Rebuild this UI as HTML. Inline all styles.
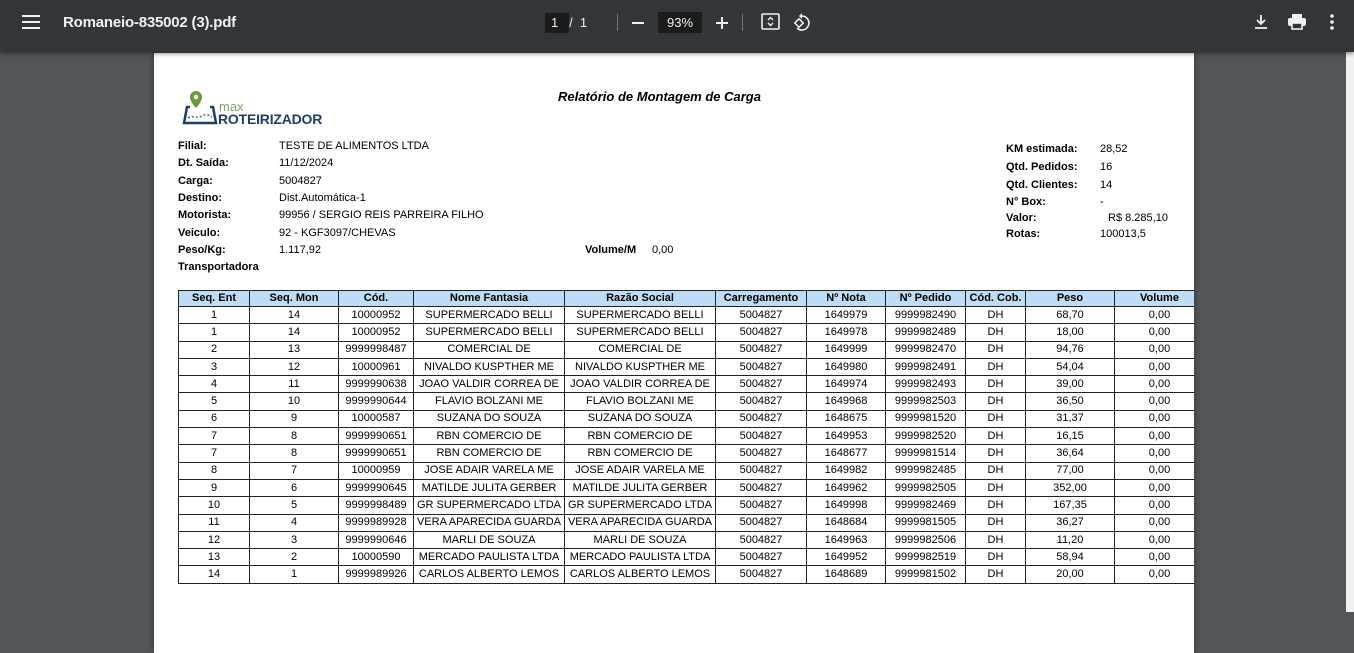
<!DOCTYPE html>
<html><head><meta charset="utf-8"><style>
*{margin:0;padding:0;box-sizing:border-box}
body{width:1354px;height:612px;overflow:hidden;background:#525659;font-family:"Liberation Sans",Arial,sans-serif;position:relative}
.bar{position:absolute;left:0;top:0;width:1354px;height:52px;background:#323639;box-shadow:0 2px 4px rgba(0,0,0,.4);z-index:5;color:#f1f1f1}
.page{position:absolute;left:154px;top:53px;width:1040px;height:600px;background:#fff;overflow:hidden;box-shadow:0 0 6px rgba(0,0,0,.4)}
.t{position:absolute;font-size:11px;color:#000;white-space:nowrap}
.b{font-weight:bold}
table{position:absolute;left:24px;top:237px;width:1026px;border-collapse:collapse;table-layout:fixed;font-size:11px}
td,th{border:1px solid #222;height:17.3px;text-align:center;white-space:nowrap;overflow:hidden;padding:0;line-height:15px}
th{background:#bfdcf7;height:15px;font-weight:bold}
.sb{position:absolute;right:0;top:52px;width:8px;height:560px;background:#f1f1f1}
</style></head><body>
<div class="bar">
<svg style="position:absolute;left:22px;top:14px" width="18" height="16"><rect y="1" width="18" height="2" fill="#f1f1f1"/><rect y="7" width="18" height="2" fill="#f1f1f1"/><rect y="13" width="18" height="2" fill="#f1f1f1"/></svg>
<div style="position:absolute;left:63px;top:14px;font-size:15px;font-weight:bold;letter-spacing:-.2px">Romaneio-835002 (3).pdf</div>
<div style="position:absolute;left:545px;top:13px;width:24px;height:20px;background:#191b1c"></div>
<div style="position:absolute;left:551px;top:15px;font-size:13px">1&nbsp;&nbsp;&nbsp;/&nbsp;&nbsp;1</div>
<div style="position:absolute;left:617px;top:14px;width:1px;height:17px;background:#777"></div>
<div style="position:absolute;left:632px;top:22px;width:12px;height:2px;background:#f1f1f1"></div>
<div style="position:absolute;left:658px;top:12px;width:44px;height:21px;background:#191b1c;font-size:13px;text-align:center;line-height:21px">93%</div>
<div style="position:absolute;left:716px;top:22px;width:12px;height:2px;background:#f1f1f1"></div>
<div style="position:absolute;left:721px;top:17px;width:2px;height:12px;background:#f1f1f1"></div>
<div style="position:absolute;left:742px;top:14px;width:1px;height:17px;background:#777"></div>
<svg style="position:absolute;left:761px;top:13px" width="20" height="18"><rect x="1" y="1" width="17" height="15" rx="1" fill="none" stroke="#f1f1f1" stroke-width="1.6"/><path d="M7 7l2.5-2.5L12 7M7 10l2.5 2.5L12 10" fill="none" stroke="#f1f1f1" stroke-width="1.4"/></svg>
<svg style="position:absolute;left:793px;top:12px" width="20" height="20"><path d="M9 4a7 7 0 1 1-5 12" fill="none" stroke="#f1f1f1" stroke-width="1.6"/><path d="M9 1v6l-3-3z" fill="#f1f1f1"/><rect x="3" y="8" width="6" height="6" transform="rotate(45 6 11)" fill="none" stroke="#f1f1f1" stroke-width="1.5"/></svg>
<svg style="position:absolute;left:1253px;top:14px" width="16" height="16"><path d="M8 1v9M4 6l4 4 4-4M2 14h12" fill="none" stroke="#f1f1f1" stroke-width="1.8"/></svg>
<svg style="position:absolute;left:1288px;top:13px" width="18" height="17"><rect x="4" y="1" width="10" height="4" fill="#f1f1f1"/><rect x="0" y="5" width="18" height="8" rx="2" fill="#f1f1f1"/><rect x="4" y="10" width="10" height="6" fill="#323639" stroke="#f1f1f1" stroke-width="1.6"/></svg>
<svg style="position:absolute;left:1330px;top:14px" width="4" height="16"><circle cx="2" cy="2" r="1.8" fill="#f1f1f1"/><circle cx="2" cy="8" r="1.8" fill="#f1f1f1"/><circle cx="2" cy="14" r="1.8" fill="#f1f1f1"/></svg>
</div>
<div class="sb"></div>
<div class="page">
<svg style="position:absolute;left:28px;top:36px" width="36" height="40"><path d="M14 2a6 6 0 0 1 6 6c0 5-6 11-6 11s-6-6-6-11a6 6 0 0 1 6-6z" fill="#6b9a3c"/><circle cx="14" cy="8" r="2.3" fill="#fff"/><path d="M8 18H5L2 34h32l-3-16h-3" fill="none" stroke="#1e3f66" stroke-width="2.5"/><path d="M6 29c5-3 9 1 14-2s8 0 10 1" fill="none" stroke="#1e3f66" stroke-width="1.2" stroke-dasharray="2 2"/></svg>
<div style="position:absolute;left:65px;top:46px;font-size:13px;color:#7ea35a">max</div>
<div style="position:absolute;left:64px;top:58px;font-size:14px;font-weight:bold;color:#1e3f66;letter-spacing:-.2px">ROTEIRIZADOR</div>
<div class="t b" style="left:404px;top:36px;font-size:13px;font-style:italic">Relatório de Montagem de Carga</div>
<div class="t b" style="left:24px;top:87px">Filial:</div><div class="t" style="left:125px;top:87px">TESTE DE ALIMENTOS LTDA</div>
<div class="t b" style="left:24px;top:104px">Dt. Saída:</div><div class="t" style="left:125px;top:104px">11/12/2024</div>
<div class="t b" style="left:24px;top:122px">Carga:</div><div class="t" style="left:125px;top:122px">5004827</div>
<div class="t b" style="left:24px;top:139px">Destino:</div><div class="t" style="left:125px;top:139px">Dist.Automática-1</div>
<div class="t b" style="left:24px;top:156px">Motorista:</div><div class="t" style="left:125px;top:156px">99956 / SERGIO REIS PARREIRA FILHO</div>
<div class="t b" style="left:24px;top:174px">Veiculo:</div><div class="t" style="left:125px;top:174px">92 - KGF3097/CHEVAS</div>
<div class="t b" style="left:24px;top:191px">Peso/Kg:</div><div class="t" style="left:125px;top:191px">1.117,92</div>
<div class="t b" style="left:431px;top:191px">Volume/M</div><div class="t" style="left:498px;top:191px">0,00</div>
<div class="t b" style="left:24px;top:208px">Transportadora</div>
<div class="t b" style="left:852px;top:90px">KM estimada:</div><div class="t" style="left:946px;top:90px">28,52</div>
<div class="t b" style="left:852px;top:108px">Qtd. Pedidos:</div><div class="t" style="left:946px;top:108px">16</div>
<div class="t b" style="left:852px;top:126px">Qtd. Clientes:</div><div class="t" style="left:946px;top:126px">14</div>
<div class="t b" style="left:852px;top:143px">N° Box:</div><div class="t" style="left:946px;top:143px">-</div>
<div class="t b" style="left:852px;top:159px">Valor:</div><div class="t" style="left:954px;top:159px">R$ 8.285,10</div>
<div class="t b" style="left:852px;top:175px">Rotas:</div><div class="t" style="left:946px;top:175px">100013,5</div>
<table>
<colgroup><col style="width:71px"><col style="width:89px"><col style="width:75px"><col style="width:151px"><col style="width:151px"><col style="width:91px"><col style="width:79px"><col style="width:80px"><col style="width:60px"><col style="width:89px"><col style="width:90px"></colgroup>
<tr><th>Seq. Ent</th><th>Seq. Mon</th><th>Cód.</th><th>Nome Fantasia</th><th>Razão Social</th><th>Carregamento</th><th>Nº Nota</th><th>Nº Pedido</th><th>Cód. Cob.</th><th>Peso</th><th>Volume</th></tr>
<tr><td>1</td><td>14</td><td>10000952</td><td>SUPERMERCADO BELLI</td><td>SUPERMERCADO BELLI</td><td>5004827</td><td>1649979</td><td>9999982490</td><td>DH</td><td>68,70</td><td>0,00</td></tr>
<tr><td>1</td><td>14</td><td>10000952</td><td>SUPERMERCADO BELLI</td><td>SUPERMERCADO BELLI</td><td>5004827</td><td>1649978</td><td>9999982489</td><td>DH</td><td>18,00</td><td>0,00</td></tr>
<tr><td>2</td><td>13</td><td>9999998487</td><td>COMERCIAL DE</td><td>COMERCIAL DE</td><td>5004827</td><td>1649999</td><td>9999982470</td><td>DH</td><td>94,76</td><td>0,00</td></tr>
<tr><td>3</td><td>12</td><td>10000961</td><td>NIVALDO KUSPTHER ME</td><td>NIVALDO KUSPTHER ME</td><td>5004827</td><td>1649980</td><td>9999982491</td><td>DH</td><td>54,04</td><td>0,00</td></tr>
<tr><td>4</td><td>11</td><td>9999990638</td><td>JOAO VALDIR CORREA DE</td><td>JOAO VALDIR CORREA DE</td><td>5004827</td><td>1649974</td><td>9999982493</td><td>DH</td><td>39,00</td><td>0,00</td></tr>
<tr><td>5</td><td>10</td><td>9999990644</td><td>FLAVIO BOLZANI ME</td><td>FLAVIO BOLZANI ME</td><td>5004827</td><td>1649968</td><td>9999982503</td><td>DH</td><td>36,50</td><td>0,00</td></tr>
<tr><td>6</td><td>9</td><td>10000587</td><td>SUZANA DO SOUZA</td><td>SUZANA DO SOUZA</td><td>5004827</td><td>1648675</td><td>9999981520</td><td>DH</td><td>31,37</td><td>0,00</td></tr>
<tr><td>7</td><td>8</td><td>9999990651</td><td>RBN COMERCIO DE</td><td>RBN COMERCIO DE</td><td>5004827</td><td>1649953</td><td>9999982520</td><td>DH</td><td>16,15</td><td>0,00</td></tr>
<tr><td>7</td><td>8</td><td>9999990651</td><td>RBN COMERCIO DE</td><td>RBN COMERCIO DE</td><td>5004827</td><td>1648677</td><td>9999981514</td><td>DH</td><td>36,64</td><td>0,00</td></tr>
<tr><td>8</td><td>7</td><td>10000959</td><td>JOSE ADAIR VARELA ME</td><td>JOSE ADAIR VARELA ME</td><td>5004827</td><td>1649982</td><td>9999982485</td><td>DH</td><td>77,00</td><td>0,00</td></tr>
<tr><td>9</td><td>6</td><td>9999990645</td><td>MATILDE JULITA GERBER</td><td>MATILDE JULITA GERBER</td><td>5004827</td><td>1649962</td><td>9999982505</td><td>DH</td><td>352,00</td><td>0,00</td></tr>
<tr><td>10</td><td>5</td><td>9999998489</td><td>GR SUPERMERCADO LTDA</td><td>GR SUPERMERCADO LTDA</td><td>5004827</td><td>1649998</td><td>9999982469</td><td>DH</td><td>167,35</td><td>0,00</td></tr>
<tr><td>11</td><td>4</td><td>9999989928</td><td>VERA APARECIDA GUARDA</td><td>VERA APARECIDA GUARDA</td><td>5004827</td><td>1648684</td><td>9999981505</td><td>DH</td><td>36,27</td><td>0,00</td></tr>
<tr><td>12</td><td>3</td><td>9999990646</td><td>MARLI DE SOUZA</td><td>MARLI DE SOUZA</td><td>5004827</td><td>1649963</td><td>9999982506</td><td>DH</td><td>11,20</td><td>0,00</td></tr>
<tr><td>13</td><td>2</td><td>10000590</td><td>MERCADO PAULISTA LTDA</td><td>MERCADO PAULISTA LTDA</td><td>5004827</td><td>1649952</td><td>9999982519</td><td>DH</td><td>58,94</td><td>0,00</td></tr>
<tr><td>14</td><td>1</td><td>9999989926</td><td>CARLOS ALBERTO LEMOS</td><td>CARLOS ALBERTO LEMOS</td><td>5004827</td><td>1648689</td><td>9999981502</td><td>DH</td><td>20,00</td><td>0,00</td></tr>
</table>
</div>
</body></html>
